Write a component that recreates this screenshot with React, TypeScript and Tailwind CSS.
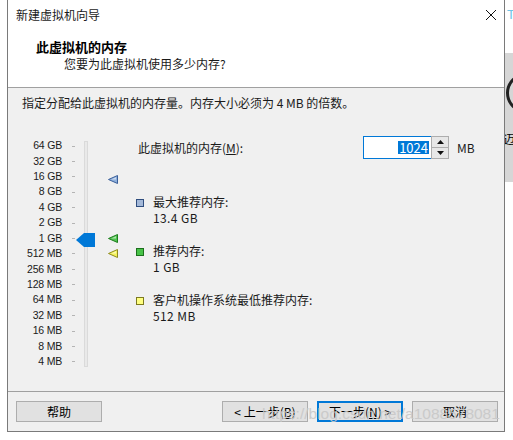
import React from 'react';

const sizes = ['64 GB', '32 GB', '16 GB', '8 GB', '4 GB', '2 GB', '1 GB', '512 MB', '256 MB', '128 MB', '64 MB', '32 MB', '16 MB', '8 MB', '4 MB'];

function Marker({ fill, stroke }: { fill: string; stroke: string }) {
  return (
    <svg width="10" height="9" viewBox="0 0 10 9">
      <polygon points="0.5,4.5 9.5,0.5 9.5,8.5" fill={fill} stroke={stroke} strokeWidth="1" />
      <polygon points="3,4.5 8,2.2 8,4.5" fill="#ffffff" opacity="0.55" />
    </svg>
  );
}

function Legend({ color, border, title, value }: { color: string; border: string; title: string; value: string }) {
  return (
    <div className="flex items-start">
      <div className="mt-[5px] w-[8px] h-[8px] border" style={{ backgroundColor: color, borderColor: border }} />
      <div className="ml-[9px] leading-[16px]">
        <div>{title}</div>
        <div className="tracking-[0.4px]">{value}</div>
      </div>
    </div>
  );
}

function Btn({ children, primary }: { children: React.ReactNode; primary?: boolean }) {
  return (
    <div
      className={
        'w-[86px] h-[21px] flex items-center justify-center bg-[#e1e1e1] text-[12px] leading-none text-black ' +
        (primary ? 'border-2 border-[#0078d7]' : 'border border-[#adadad]')
      }
    >
      {children}
    </div>
  );
}

export default function App() {
  return (
    <div className="w-[513px] h-[440px] bg-white flex overflow-hidden relative font-['Noto_Sans_CJK_SC',sans-serif] text-[12px] text-[#1a1a1a]">
      <div className="ml-[7px] w-[498px] h-[432px] flex flex-col border-x border-b border-[#7a7a7a]">
        {/* title bar */}
        <div className="h-[30px] bg-white flex items-center justify-between pl-[8px] pr-[7px]">
          <span className="leading-[16px]">新建虚拟机向导</span>
          <svg width="12" height="12" viewBox="0 0 12 12">
            <path d="M1 1 L11 11 M11 1 L1 11" stroke="#111" strokeWidth="1" />
          </svg>
        </div>

        {/* header */}
        <div className="h-[58px] bg-white border-b border-[#a0a0a0] pt-[9px]">
          <div className="pl-[28px] font-bold text-[13px] leading-[16px] text-black">此虚拟机的内存</div>
          <div className="pl-[56px] leading-[16px] mt-px">您要为此虚拟机使用多少内存?</div>
        </div>

        {/* body */}
        <div className="flex-1 bg-[#f0f0f0] pt-[7px]">
          <div className="pl-[14px] leading-[16px]">指定分配给此虚拟机的内存量。内存大小必须为 4 MB 的倍数。</div>

          <div className="flex mt-[25px]">
            {/* slider */}
            <div className="relative w-[128px] h-[233px] pt-[2.3px]">
              <div className="flex flex-col">
                {sizes.map((s) => (
                  <div key={s} className="h-[15.43px] flex items-center">
                    <span className="w-[54px] text-right font-['Liberation_Sans',sans-serif] text-[10.5px] tracking-[-0.2px] text-[#1a1a1a]">{s}</span>
                    <span className="ml-[10px] w-[3px] h-px bg-[#b4b4b4]" />
                  </div>
                ))}
              </div>
              <div className="absolute left-[76px] top-[5px] w-[4px] h-[226px] border border-[#dadada] bg-[#e9e9e9]" />
              <svg className="absolute left-[68px] top-[97px]" width="19" height="14" viewBox="0 0 19 14">
                <polygon points="0,7 8,0 19,0 19,14 8,14" fill="#0078d7" />
              </svg>
              <div className="absolute left-[100px] top-[39px]">
                <Marker fill="#8fb0dc" stroke="#3a5f9a" />
              </div>
              <div className="absolute left-[100px] top-[98px]">
                <Marker fill="#4fc34f" stroke="#1d7d1d" />
              </div>
              <div className="absolute left-[100px] top-[113px]">
                <Marker fill="#f4f25a" stroke="#8e8a1e" />
              </div>
            </div>

            {/* right column */}
            <div className="flex flex-col">
              <div className="h-[23px] flex items-center">
                <span className="ml-[2px] w-[225px] leading-[16px]">
                  此虚拟机的内存(<span className="underline">M</span>):
                </span>
                <div className="w-[69px] h-[23px] bg-white border border-[#0078d7] flex items-center justify-end pr-[2px]">
                  <span className="bg-[#0078d7] text-white text-[13px] leading-[13px] px-px">1024</span>
                </div>
                <div className="flex flex-col -ml-px">
                  <div className="w-[18px] h-[12px] border border-[#adadad] bg-[#e7e7e7] flex items-center justify-center">
                    <svg width="7" height="4" viewBox="0 0 7 4"><polygon points="3.5,0 7,4 0,4" fill="#111" /></svg>
                  </div>
                  <div className="w-[18px] h-[12px] -mt-px border border-[#adadad] bg-[#e7e7e7] flex items-center justify-center">
                    <svg width="7" height="4" viewBox="0 0 7 4"><polygon points="0,0 7,0 3.5,4" fill="#111" /></svg>
                  </div>
                </div>
                <span className="ml-[8px] leading-[16px]">MB</span>
              </div>

              <div className="mt-[35px] flex flex-col gap-[17px]">
                <Legend color="#a3b8d8" border="#2f4d7e" title="最大推荐内存:" value="13.4 GB" />
                <Legend color="#47c247" border="#1c6f1c" title="推荐内存:" value="1 GB" />
                <Legend color="#ffff80" border="#7d7a20" title="客户机操作系统最低推荐内存:" value="512 MB" />
              </div>
            </div>
          </div>
        </div>

        {/* footer */}
        <div className="h-[40px] bg-[#f0f0f0] border-t border-[#a0a0a0] pt-[9px] pl-[8px] flex">
          <Btn>帮助</Btn>
          <div className="ml-[120px] flex gap-[9px]">
            <Btn>&lt; 上一步(<span className="underline">B</span>)</Btn>
            <Btn primary>下一步(<span className="underline">N</span>) &gt;</Btn>
            <Btn>取消</Btn>
          </div>
        </div>
      </div>

      {/* neighbouring window edge */}
      <div className="flex-1 flex flex-col overflow-hidden">
        <div className="h-[53px] pt-[7px] pl-[2px] text-[#6cc4e6] text-[13px] leading-[16px] font-['Liberation_Sans',sans-serif]">T</div>
        <div className="h-[129px] bg-[#d6d6d6] relative overflow-hidden">
          <div className="absolute left-[1px] top-[20px] w-[40px] h-[40px] rounded-full border-[3px] border-[#222]" />
          <div className="absolute left-[-2px] top-[78px] text-[12px] leading-[16px] text-black">迈</div>
        </div>
      </div>

      {/* watermark */}
      <div className="absolute left-[262px] top-[404px] text-[15.5px] leading-[20px] text-[#c8c8c8] opacity-90 font-['Liberation_Sans',sans-serif] whitespace-nowrap">
        https://blog.csdn.net/a1088578081
      </div>
    </div>
  );
}
